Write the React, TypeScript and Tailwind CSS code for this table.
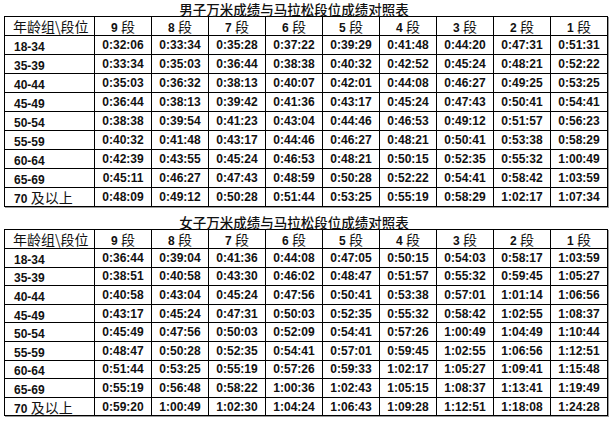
const levels = ["9", "8", "7", "6", "5", "4", "3", "2", "1"];

const ages = ["18-34", "35-39", "40-44", "45-49", "50-54", "55-59", "60-64", "65-69", "70"];

const men = [
  ["0:32:06", "0:33:34", "0:35:28", "0:37:22", "0:39:29", "0:41:48", "0:44:20", "0:47:31", "0:51:31"],
  ["0:33:34", "0:35:03", "0:36:44", "0:38:38", "0:40:32", "0:42:52", "0:45:24", "0:48:21", "0:52:22"],
  ["0:35:03", "0:36:32", "0:38:13", "0:40:07", "0:42:01", "0:44:08", "0:46:27", "0:49:25", "0:53:25"],
  ["0:36:44", "0:38:13", "0:39:42", "0:41:36", "0:43:17", "0:45:24", "0:47:43", "0:50:41", "0:54:41"],
  ["0:38:38", "0:39:54", "0:41:23", "0:43:04", "0:44:46", "0:46:53", "0:49:12", "0:51:57", "0:56:23"],
  ["0:40:32", "0:41:48", "0:43:17", "0:44:46", "0:46:27", "0:48:21", "0:50:41", "0:53:38", "0:58:29"],
  ["0:42:39", "0:43:55", "0:45:24", "0:46:53", "0:48:21", "0:50:15", "0:52:35", "0:55:32", "1:00:49"],
  ["0:45:11", "0:46:27", "0:47:43", "0:48:59", "0:50:28", "0:52:22", "0:54:41", "0:58:42", "1:03:59"],
  ["0:48:09", "0:49:12", "0:50:28", "0:51:44", "0:53:25", "0:55:19", "0:58:29", "1:02:17", "1:07:34"],
];

const women = [
  ["0:36:44", "0:39:04", "0:41:36", "0:44:08", "0:47:05", "0:50:15", "0:54:03", "0:58:17", "1:03:59"],
  ["0:38:51", "0:40:58", "0:43:30", "0:46:02", "0:48:47", "0:51:57", "0:55:32", "0:59:45", "1:05:27"],
  ["0:40:58", "0:43:04", "0:45:24", "0:47:56", "0:50:41", "0:53:38", "0:57:01", "1:01:14", "1:06:56"],
  ["0:43:17", "0:45:24", "0:47:31", "0:50:03", "0:52:35", "0:55:32", "0:58:42", "1:02:55", "1:08:37"],
  ["0:45:49", "0:47:56", "0:50:03", "0:52:09", "0:54:41", "0:57:26", "1:00:49", "1:04:49", "1:10:44"],
  ["0:48:47", "0:50:28", "0:52:35", "0:54:41", "0:57:01", "0:59:45", "1:02:55", "1:06:56", "1:12:51"],
  ["0:51:44", "0:53:25", "0:55:19", "0:57:26", "0:59:33", "1:02:17", "1:05:27", "1:09:41", "1:15:48"],
  ["0:55:19", "0:56:48", "0:58:22", "1:00:36", "1:02:43", "1:05:15", "1:08:37", "1:13:41", "1:19:49"],
  ["0:59:20", "1:00:49", "1:02:30", "1:04:24", "1:06:43", "1:09:28", "1:12:51", "1:18:08", "1:24:28"],
];

const cjk = "font-['Noto_Sans_CJK_SC',sans-serif] font-normal";
const num = "font-['Liberation_Sans',Arial,sans-serif] font-bold";

function PaceTable({ title, data, rowClass }: { title: string; data: string[][]; rowClass: string }) {
  return (
    <div>
      <h2 className="h-[16px] pt-[2px] pr-[22px] text-center font-['Noto_Sans_CJK_SC',sans-serif] text-[13.5px] leading-[14px] font-medium text-[#111]">
        {title}
      </h2>
      <table className="w-[602px] table-fixed border-collapse border border-black text-[#111] shadow-[1px_1px_0_#9a9a9a]">
        <colgroup>
          <col className="w-[90px]" />
          {levels.map((l) => (
            <col key={l} className="w-[57px]" />
          ))}
        </colgroup>
        <thead>
          <tr className="h-[19px]">
            <th className={`${cjk} border border-black pl-[8px] text-left text-[14px] leading-none`}>
              年龄组\段位
            </th>
            {levels.map((l) => (
              <th key={l} className="border border-black text-center leading-none">
                <span className={`${num} text-[12px]`}>{l} </span>
                <span className={`${cjk} text-[14px]`}>段</span>
              </th>
            ))}
          </tr>
        </thead>
        <tbody>
          {data.map((row, i) => (
            <tr key={ages[i]} className={rowClass}>
              <td className="border border-black pl-[9px] text-left leading-none">
                {ages[i] === "70" ? (
                  <>
                    <span className={`${num} text-[12px]`}>70 </span>
                    <span className={`${cjk} text-[14px]`}>及以上</span>
                  </>
                ) : (
                  <span className={`${num} text-[12px]`}>{ages[i]}</span>
                )}
              </td>
              {row.map((t, j) => (
                <td key={j} className={`${num} border border-black text-center text-[12px] leading-none`}>
                  {t}
                </td>
              ))}
            </tr>
          ))}
        </tbody>
      </table>
    </div>
  );
}

export default function App() {
  return (
    <div className="h-[423px] w-[610px] overflow-hidden bg-white px-[4px]">
      <PaceTable title="男子万米成绩与马拉松段位成绩对照表" data={men} rowClass="h-[19px]" />
      <div className="h-[6px]" />
      <PaceTable title="女子万米成绩与马拉松段位成绩对照表" data={women} rowClass="h-[18.6px]" />
    </div>
  );
}
